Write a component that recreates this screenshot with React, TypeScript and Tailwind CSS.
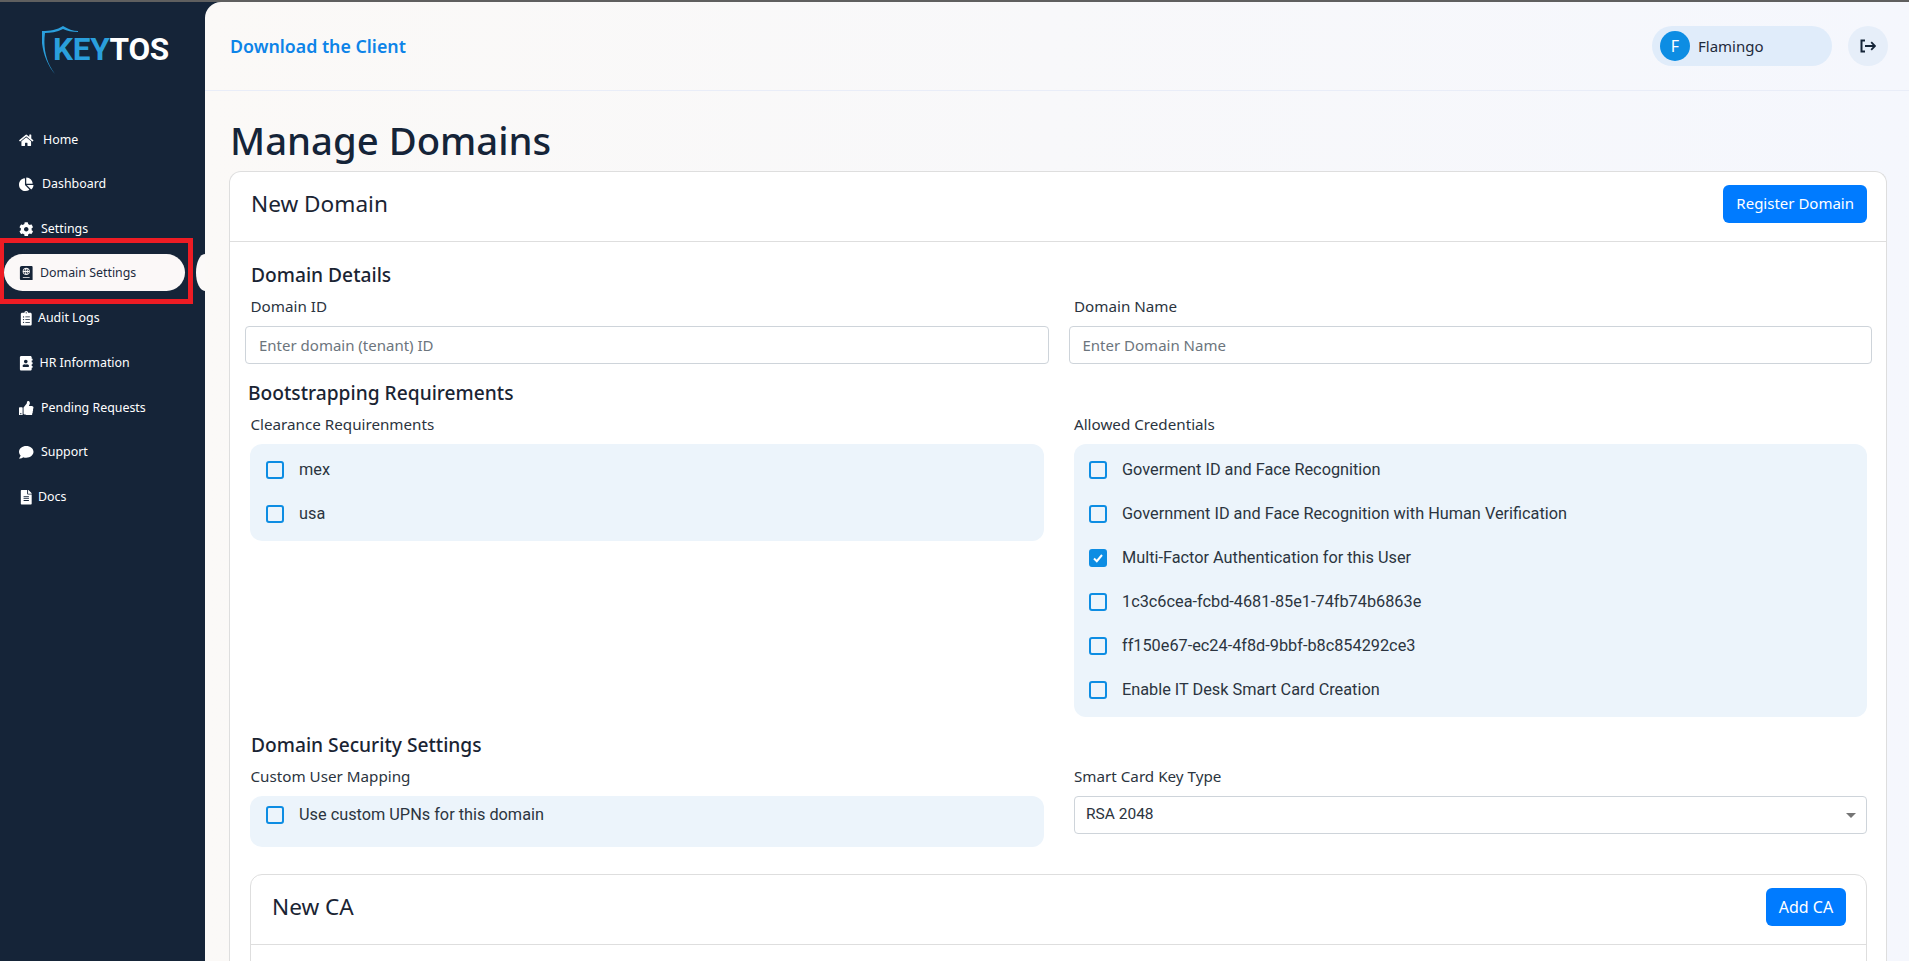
import { useState } from "react";
import {
  FaAddressBook,
  FaChartPie,
  FaClipboardList,
  FaCog,
  FaComment,
  FaFileAlt,
  FaHome,
  FaPassport,
  FaThumbsUp,
} from "react-icons/fa";

const navItems = [
  { label: "Home", icon: FaHome, iconBox: "w-[24px]" },
  { label: "Dashboard", icon: FaChartPie, iconBox: "w-[23px]" },
  { label: "Settings", icon: FaCog, iconBox: "w-[22px]" },
  { label: "Domain Settings", icon: FaPassport, iconBox: "w-[21px]", active: true },
  { label: "Audit Logs", icon: FaClipboardList, iconBox: "w-[19px]" },
  { label: "HR Information", icon: FaAddressBook, iconBox: "w-[20.5px]" },
  { label: "Pending Requests", icon: FaThumbsUp, iconBox: "w-[22px]" },
  { label: "Support", icon: FaComment, iconBox: "w-[22px]" },
  { label: "Docs", icon: FaFileAlt, iconBox: "w-[19px]" },
];

const credentials = [
  { label: "Goverment ID and Face Recognition", checked: false },
  { label: "Government ID and Face Recognition with Human Verification", checked: false },
  { label: "Multi-Factor Authentication for this User", checked: true },
  { label: "1c3c6cea-fcbd-4681-85e1-74fb74b6863e", checked: false },
  { label: "ff150e67-ec24-4f8d-9bbf-b8c854292ce3", checked: false },
  { label: "Enable IT Desk Smart Card Creation", checked: false },
];

function Logo() {
  return (
    <div className="flex h-[90px] items-start pl-[42px] pt-[24px]">
      <svg width="36" height="48" viewBox="0 0 36 48" className="-mr-[25px] shrink-0">
        <path
          d="M0 5 C8 5 15 4 21 0 C26 3 31 5 36 5 L36 6 C30 6 25 5 21 3 C15 6 8 7 3 7 C1 22 4 36 13 48 C4 38 -2 20 0 5Z"
          fill="#2a9fdc"
        />
      </svg>
      <div className="mt-[5px] font-['Roboto',sans-serif] text-[31.5px] leading-[38px] font-bold tracking-[-0.3px]">
        <span className="text-[#2a9fdc]">KEY</span>
        <span className="text-white">TOS</span>
      </div>
    </div>
  );
}

function Sidebar() {
  return (
    <aside className="relative flex w-[205px] shrink-0 flex-col">
      <Logo />
      <nav className="mt-[25.5px] flex flex-col font-['Noto_Sans',sans-serif] text-[12.4px]">
        {navItems.map((item) => {
          const Icon = item.icon;
          if (item.active) {
            return (
              <div key={item.label} className="flex h-[44.7px] items-center pb-[2px] pl-[4px]">
                <div className="flex h-[37px] w-[181px] shrink-0 items-center rounded-full bg-[#fbf8f8] pl-[15px] text-[#1b2a3e]">
                  <span className={item.iconBox}>
                    <Icon className="h-[14.5px] w-auto text-[#152438]" />
                  </span>
                  <span>{item.label}</span>
                </div>
              </div>
            );
          }
          return (
            <div key={item.label} className="flex h-[44.7px] items-center pl-[19px] text-white">
              <span className={item.iconBox}>
                <Icon className="h-[14.5px] w-auto" />
              </span>
              <span>{item.label}</span>
            </div>
          );
        })}
      </nav>
      {/* red annotation box and the notch that sit over the nav */}
      <div className="absolute left-0 top-[236px] h-[66px] w-[193px] border-[5px] border-l-[4px] border-[#ed1c24]" />
      <div className="absolute right-0 top-[252px] h-[37px] w-[9px] rounded-tl-[9px_18.5px] rounded-bl-[9px_18.5px] bg-[#fbf9f8]" />
    </aside>
  );
}

function Checkbox({ checked }: { checked: boolean }) {
  return (
    <span
      className={`flex h-[18px] w-[18px] shrink-0 items-center justify-center rounded-[3px] border-2 border-[#0d8de3] ${
        checked ? "bg-[#0d8de3]" : "bg-transparent"
      }`}
    >
      {checked && (
        <svg width="12" height="12" viewBox="0 0 12 12" fill="none">
          <path d="M2 6.5 L4.8 9.2 L10 3" stroke="white" strokeWidth="2" />
        </svg>
      )}
    </span>
  );
}

function CheckRow({ label, checked = false }: { label: string; checked?: boolean }) {
  const [on, setOn] = useState(checked);
  return (
    <div className="flex h-[44px] cursor-pointer items-center" onClick={() => setOn(!on)}>
      <Checkbox checked={on} />
      <span className="ml-[15px] text-[16.3px] text-[#2b3440]">{label}</span>
    </div>
  );
}

type CardHeaderProps = {
  title: string;
  action: string;
  className?: string;
  buttonClass?: string;
};

function CardHeader({ title, action, className = "", buttonClass = "" }: CardHeaderProps) {
  return (
    <div className={`flex h-[70px] items-center justify-between border-b border-[#dedede] pb-[6px] ${className}`}>
      <h2 className="text-[22.6px] font-normal text-[#1a2433]">{title}</h2>
      <button className={`h-[38px] rounded-[6px] bg-[#007bff] text-white ${buttonClass}`}>{action}</button>
    </div>
  );
}

function Section({ children, className = "" }: { children: React.ReactNode; className?: string }) {
  return <h3 className={`text-[19.2px] leading-[24px] font-medium text-[#1a2433] ${className}`}>{children}</h3>;
}

function Label({ children }: { children: React.ReactNode }) {
  return <div className="ml-[5.5px] text-[15.2px] leading-[24px] text-[#2b3440]">{children}</div>;
}

function TextField({ placeholder }: { placeholder: string }) {
  return (
    <input
      placeholder={placeholder}
      className="mt-[8px] h-[38px] w-full rounded-[4px] border border-[#ced4da] bg-white px-[13px] text-[15px] outline-none placeholder:text-[#6c757d]"
    />
  );
}

export default function App() {
  return (
    <div className="flex h-[961px] w-[1909px] flex-col overflow-hidden bg-[#152438] font-['Noto_Sans',sans-serif]">
      <div className="h-[2px] shrink-0 bg-[#5f5f5f]" />
      <div className="flex min-h-0 flex-1">
        <Sidebar />
        <main className="flex min-w-0 flex-1 flex-col overflow-hidden rounded-tl-[16px] bg-gradient-to-r from-[#fbf9f7] to-[#f5f7fd]">
          <header className="flex h-[89px] shrink-0 items-center justify-between border-b border-[#e9edf8] pl-[25px] pr-[21px]">
            <a className="text-[17.8px] font-semibold text-[#0d84e8]">Download the Client</a>
            <div className="flex items-center gap-[16px]">
              <div className="flex h-[40px] w-[180px] items-center rounded-full bg-[#e0ecfa] pl-[8px]">
                <span className="flex h-[30px] w-[30px] items-center justify-center rounded-full bg-[#0d8de3] text-[16px] text-white">
                  F
                </span>
                <span className="ml-[8px] text-[15px] text-[#1f2a3a]">Flamingo</span>
              </div>
              <button className="flex h-[40px] w-[40px] items-center justify-center rounded-full bg-[#e6eef9]">
                <svg width="16" height="16" viewBox="0 0 16 16" fill="none" stroke="#152438">
                  <path d="M5 2.5 H1.5 V13.5 H5" strokeWidth="2" />
                  <path d="M5 8 H15 M11.2 4.2 L15 8 L11.2 11.8" strokeWidth="1.8" />
                </svg>
              </button>
            </div>
          </header>

          <div className="ml-[24px] mr-[22px] flex min-h-0 flex-1 flex-col">
            <h1 className="mt-[22px] ml-[1px] h-[58px] shrink-0 text-[38.3px] leading-[54px] font-medium text-[#152438]">
              Manage Domains
            </h1>
            <section className="flex-1 rounded-t-[12px] border border-b-0 border-[#dedede] bg-white">
              <CardHeader
                title="New Domain"
                action="Register Domain"
                className="pl-[21px] pr-[19px]"
                buttonClass="px-[13px] text-[15px]"
              />
              <div className="pl-[15px] pr-[14px]">
                <Section className="mt-[21px] ml-[6px]">Domain Details</Section>
                <div className="mt-[7px] grid grid-cols-2 gap-x-[20px]">
                  <div>
                    <Label>Domain ID</Label>
                    <TextField placeholder="Enter domain (tenant) ID" />
                  </div>
                  <div>
                    <Label>Domain Name</Label>
                    <TextField placeholder="Enter Domain Name" />
                  </div>
                </div>

                <Section className="mt-[17px] ml-[3px]">Bootstrapping Requirements</Section>
                <div className="mt-[7px] grid grid-cols-2 gap-x-[20px]">
                  <div>
                    <Label>Clearance Requirenments</Label>
                    <div className="mx-[5px] mt-[8px] rounded-[12px] bg-[#ecf4fb] pt-[4px] pb-[5px] pl-[16px] font-['Roboto',sans-serif]">
                      <CheckRow label="mex" />
                      <CheckRow label="usa" />
                    </div>
                  </div>
                  <div>
                    <Label>Allowed Credentials</Label>
                    <div className="mt-[8px] mr-[5px] ml-[5.5px] rounded-[12px] bg-[#ecf4fb] pt-[4px] pb-[5px] pl-[15px] font-['Roboto',sans-serif]">
                      {credentials.map((item) => (
                        <CheckRow key={item.label} label={item.label} checked={item.checked} />
                      ))}
                    </div>
                  </div>
                </div>

                <Section className="mt-[16px] ml-[6px]">Domain Security Settings</Section>
                <div className="mt-[7px] grid grid-cols-2 gap-x-[20px]">
                  <div>
                    <Label>Custom User Mapping</Label>
                    <div className="mx-[5px] mt-[8px] h-[51px] rounded-[12px] bg-[#ecf4fb] pl-[16px] font-['Roboto',sans-serif]">
                      <div className="flex h-[38px] items-center">
                        <Checkbox checked={false} />
                        <span className="ml-[15px] text-[16.3px] text-[#2b3440]">Use custom UPNs for this domain</span>
                      </div>
                    </div>
                  </div>
                  <div>
                    <Label>Smart Card Key Type</Label>
                    <div className="relative mt-[8px] mr-[5px] ml-[5.5px]">
                      <select className="h-[38px] w-full appearance-none rounded-[4px] border border-[#ced4da] bg-white px-[11px] font-['Roboto',sans-serif] text-[15.5px] text-[#2b3440] outline-none">
                        <option>RSA 2048</option>
                      </select>
                      <svg width="10" height="5" viewBox="0 0 10 5" className="pointer-events-none absolute top-[17px] right-[11px]">
                        <path d="M0 0 H10 L5 5Z" fill="#757575" />
                      </svg>
                    </div>
                  </div>
                </div>

                <div className="mx-[5px] mt-[27px] h-[200px] rounded-t-[12px] border border-[#dedede]">
                  <CardHeader
                    title="New CA"
                    action="Add CA"
                    className="pl-[21px] pr-[20px]"
                    buttonClass="w-[80px] text-[16px]"
                  />
                </div>
              </div>
            </section>
          </div>
        </main>
      </div>
    </div>
  );
}
